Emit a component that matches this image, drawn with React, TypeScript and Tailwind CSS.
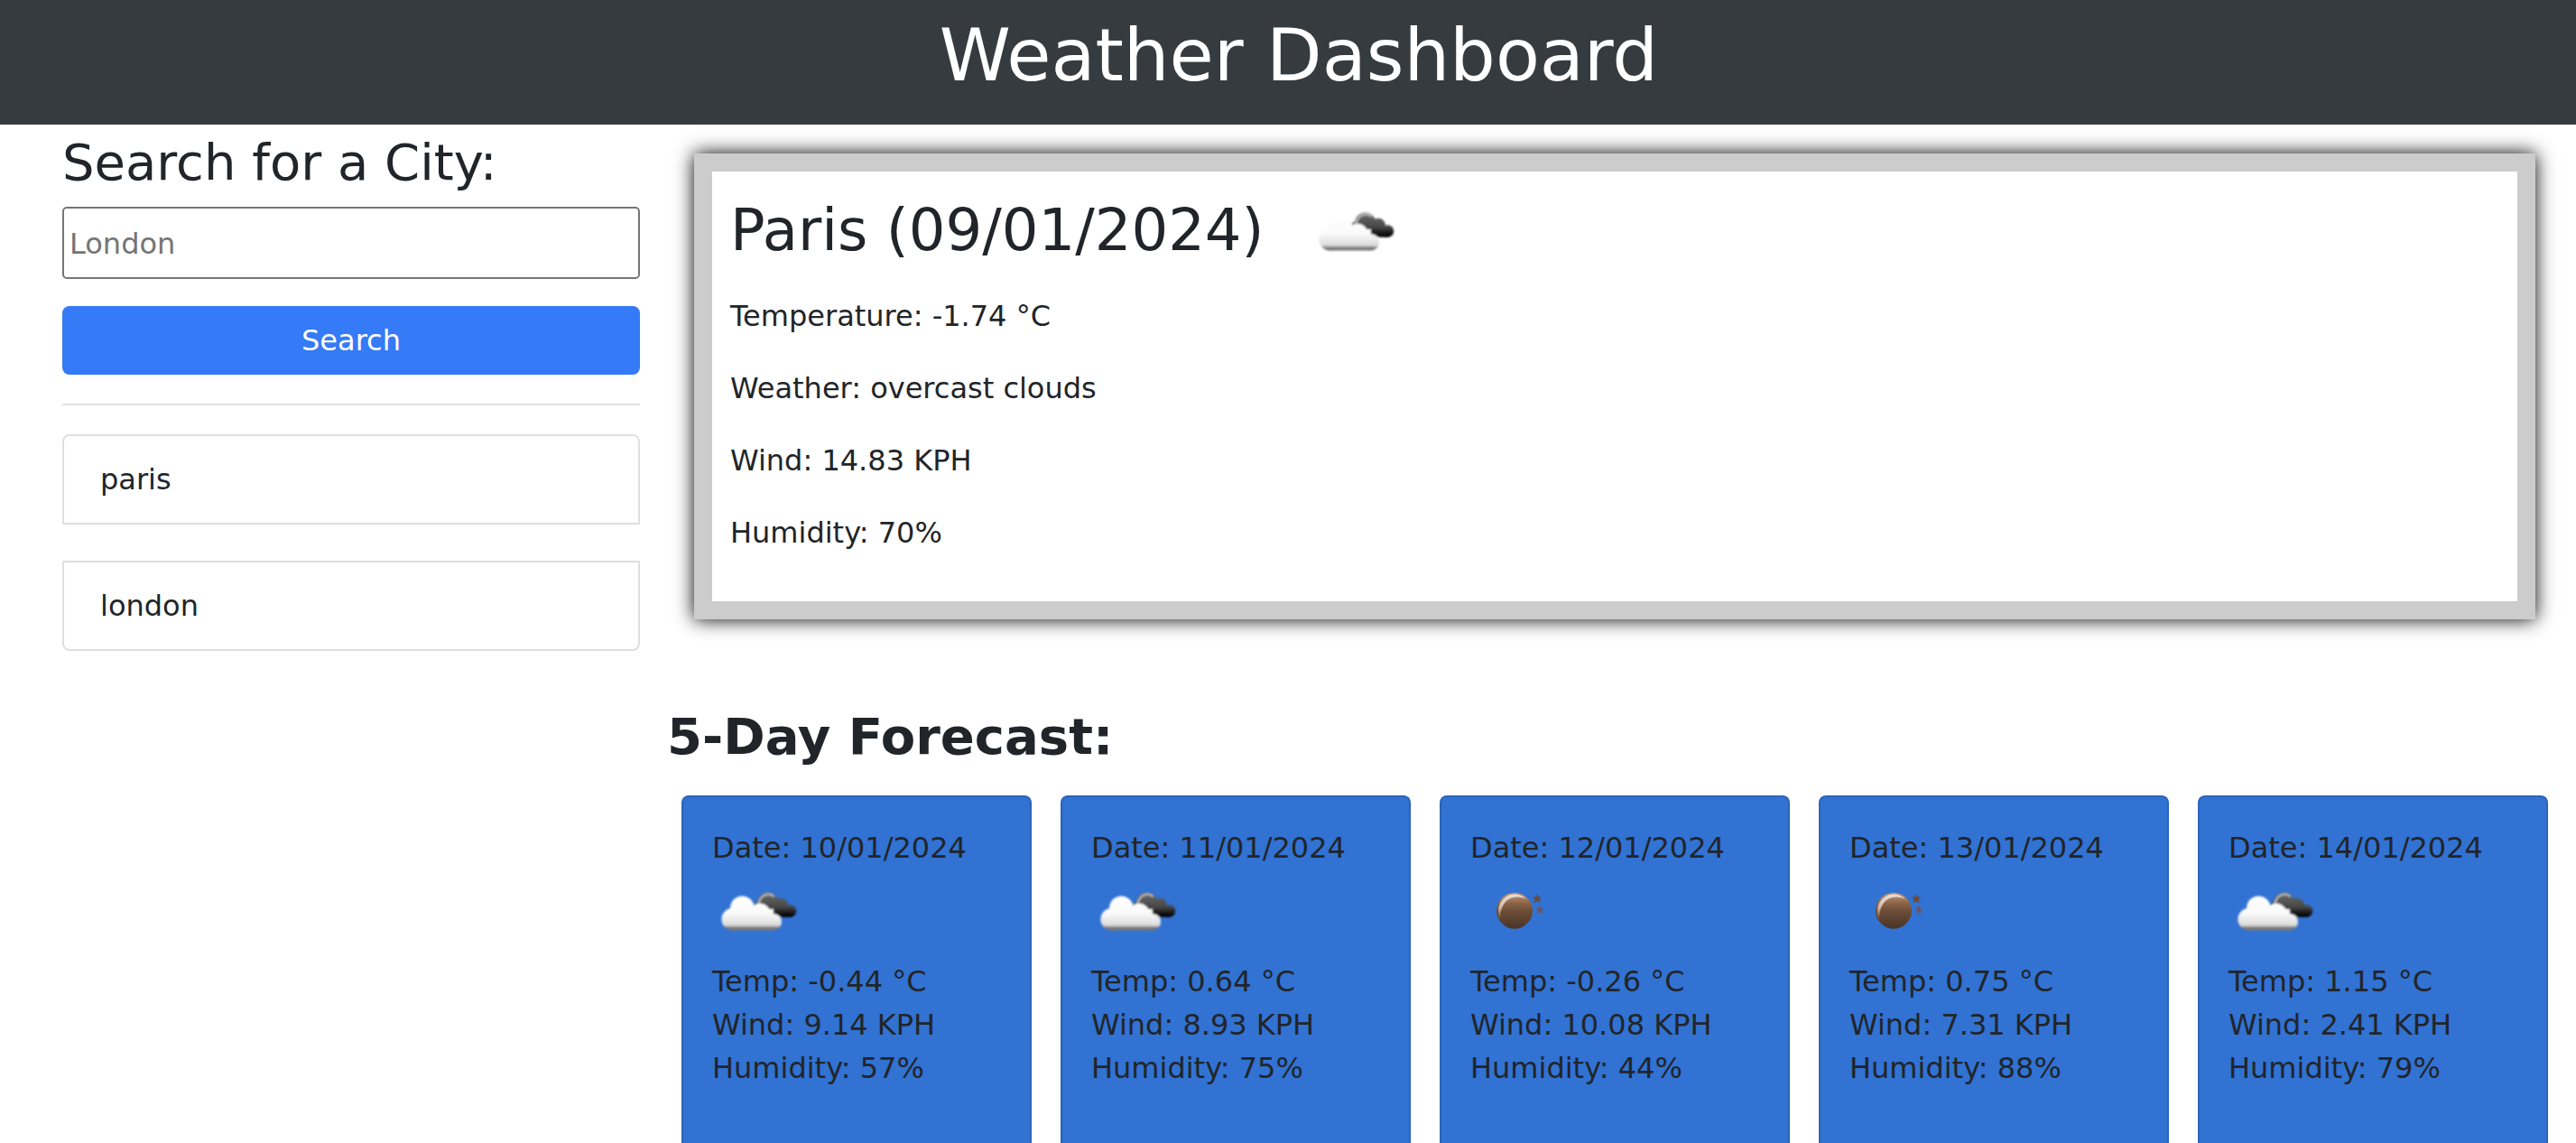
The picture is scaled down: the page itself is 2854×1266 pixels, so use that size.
import { useId } from 'react';

type Sky = 'clouds' | 'clear';

interface Day {
  date: string;
  sky: Sky;
  temp: string;
  wind: string;
  humidity: string;
}

const days: Day[] = [
  { date: '10/01/2024', sky: 'clouds', temp: '-0.44', wind: '9.14', humidity: '57' },
  { date: '11/01/2024', sky: 'clouds', temp: '0.64', wind: '8.93', humidity: '75' },
  { date: '12/01/2024', sky: 'clear', temp: '-0.26', wind: '10.08', humidity: '44' },
  { date: '13/01/2024', sky: 'clear', temp: '0.75', wind: '7.31', humidity: '88' },
  { date: '14/01/2024', sky: 'clouds', temp: '1.15', wind: '2.41', humidity: '79' },
];

const details = [
  'Temperature: -1.74 °C',
  'Weather: overcast clouds',
  'Wind: 14.83 KPH',
  'Humidity: 70%',
];

const history = ['paris', 'london'];

function CloudsIcon() {
  const id = useId();
  return (
    <svg viewBox="0 0 100 100" className="size-[100px] shrink-0" role="img" aria-label="Clouds">
      <defs>
        <linearGradient id={`${id}w`} gradientUnits="userSpaceOnUse" x1="0" y1="29.500" x2="0" y2="67.500">
          <stop offset="0" stopColor="#ffffff" />
          <stop offset="0.5" stopColor="#fafafa" />
          <stop offset="0.84" stopColor="#dcdcdc" />
          <stop offset="0.89" stopColor="#a5a5a5" />
          <stop offset="0.95" stopColor="#6a6a6a" />
          <stop offset="1" stopColor="#858585" />
        </linearGradient>
        <linearGradient id={`${id}d`} gradientUnits="userSpaceOnUse" x1="0" y1="25" x2="0" y2="52.500">
          <stop offset="0" stopColor="#6e6e6e" />
          <stop offset="0.6" stopColor="#464646" />
          <stop offset="0.82" stopColor="#1c1c1c" />
          <stop offset="1" stopColor="#000000" />
        </linearGradient>
        <filter id={`${id}b`} x="-10%" y="-10%" width="120%" height="120%">
          <feGaussianBlur stdDeviation="0.8" />
        </filter>
      </defs>
      <g filter={`url(#${id}b)`}>
        <g fill={`url(#${id}d)`}>
          <circle cx="61.700" cy="37" r="11.500" />
          <circle cx="76" cy="39.500" r="7.800" />
          <circle cx="86.500" cy="46" r="6.700" />
          <rect x="58" y="40" width="28.500" height="12.700" />
          <path d="M46 38L52 34V44Z" />
        </g>
        <path d="M51.500 38C52.500 32 56.500 28 61.500 27.500C64.500 27.300 67 28.500 68.500 30" fill="none" stroke="#bcbcbc" strokeWidth="2.200" />
        <g fill={`url(#${id}w)`}>
          <circle cx="33.300" cy="42.700" r="13.200" />
          <circle cx="53" cy="49.200" r="11.500" />
          <circle cx="67.700" cy="58.200" r="9.300" />
          <circle cx="22.800" cy="55.200" r="12.400" />
          <rect x="22.800" y="44" width="45" height="23.500" />
        </g>
      </g>
    </svg>
  );
}

function ClearNightIcon() {
  const id = useId();
  return (
    <svg viewBox="0 0 100 100" className="size-[100px] shrink-0" role="img" aria-label="Clear night">
      <defs>
        <linearGradient id={`${id}m`} x1="0" y1="0" x2="0" y2="1">
          <stop offset="0" stopColor="#c99b7c" />
          <stop offset="0.3" stopColor="#8a6345" />
          <stop offset="0.5" stopColor="#6d4e38" />
          <stop offset="1" stopColor="#493428" />
        </linearGradient>
        <linearGradient id={`${id}h`} x1="0.2" y1="0" x2="0.2" y2="1">
          <stop offset="0" stopColor="#eadfda" />
          <stop offset="0.5" stopColor="#d2b7a8" />
          <stop offset="1" stopColor="#a07a60" stopOpacity="0" />
        </linearGradient>
        <filter id={`${id}b`} x="-10%" y="-10%" width="120%" height="120%">
          <feGaussianBlur stdDeviation="0.7" />
        </filter>
      </defs>
      <g filter={`url(#${id}b)`}>
        <circle cx="49" cy="45.700" r="20" fill={`url(#${id}m)`} />
        <path
          d="M33.500 57C28.500 47 31 35 40 30C47 26 56 27 61.500 32.500C55 29.500 47 29.500 41 34C34.500 39.500 32.500 49 33.500 57Z"
          fill={`url(#${id}h)`}
        />
        <path
          d="M74 28L75.200 30.800L78.300 31L76 33.200L76.900 36.500L74 34.800L71.100 36.500L72 33.200L69.700 31L72.800 30.800Z"
          fill="#6b4c3c"
          stroke="#6b4c3c"
        />
        <path
          d="M77 41L78 43.500L80.700 43.700L78.700 45.500L79.400 48.200L77 46.800L74.600 48.200L75.300 45.500L73.300 43.700L76 43.500Z"
          fill="#6b5560"
          stroke="#6b5560"
        />
      </g>
    </svg>
  );
}

function ForecastCard({ day }: { day: Day }) {
  return (
    <article className="rounded-t-lg border-2 border-b-0 border-[#2b64b9] bg-[#3172d3] p-8">
      <p>Date: {day.date}</p>
      {day.sky === 'clouds' ? <CloudsIcon /> : <ClearNightIcon />}
      <p>Temp: {day.temp} °C</p>
      <p>Wind: {day.wind} KPH</p>
      <p>Humidity: {day.humidity}%</p>
    </article>
  );
}

export default function App() {
  return (
    <div className="flex min-h-screen flex-col bg-white font-['Verdana','DejaVu_Sans',sans-serif] text-[32px] leading-[48px] text-[#212529]">
      <header className="bg-[#363b3f] pt-[14px] pb-7 pl-6 text-center text-white">
        <h1 className="text-[80px] leading-[96px]">Weather Dashboard</h1>
      </header>

      <div className="grid flex-1 grid-cols-[1fr_3fr] pr-[15px] pl-[39px]">
        <aside className="px-[30px] pt-2">
          <form onSubmit={(e) => e.preventDefault()}>
            <label htmlFor="city" className="block text-[56px] leading-[68px]">
              Search for a City:
            </label>
            <input
              id="city"
              type="text"
              placeholder="London"
              className="mt-[15px] block h-20 w-full rounded-[5px] border-2 border-[#767676] px-1.5 pt-0.5 placeholder:text-[#757575]"
            />
            <button type="submit" className="mt-[30px] block h-[76px] w-full rounded-lg bg-[#357af6] text-white">
              Search
            </button>
          </form>
          <hr className="my-8 border-t-2 border-[#e3e3e3]" />
          <ul className="flex flex-col gap-10">
            {history.map((city) => (
              <li key={city} className="group">
                <button
                  type="button"
                  className="block w-full border-2 border-[#dfdfdf] px-10 py-6 text-left group-first:rounded-t-lg group-last:rounded-b-lg"
                >
                  {city}
                </button>
              </li>
            ))}
          </ul>
        </aside>

        <main className="flex flex-col">
          <section className="mx-[30px] mt-8 border-[20px] border-[#cccccc] bg-white p-5 shadow-[0_0_20px_#000000]">
            <div className="mb-4 flex items-center gap-[50px]">
              <h2 className="pb-[10px] text-[64px] leading-[76px]">Paris (09/01/2024)</h2>
              <CloudsIcon />
            </div>
            {details.map((line) => (
              <p key={line} className="mb-8">
                {line}
              </p>
            ))}
          </section>

          <h2 className="mt-24 text-[56px] leading-[67px] font-bold">5-Day Forecast:</h2>
          <section className="mt-8 grid flex-1 grid-cols-5 gap-8 px-4">
            {days.map((day) => (
              <ForecastCard key={day.date} day={day} />
            ))}
          </section>
        </main>
      </div>
    </div>
  );
}
